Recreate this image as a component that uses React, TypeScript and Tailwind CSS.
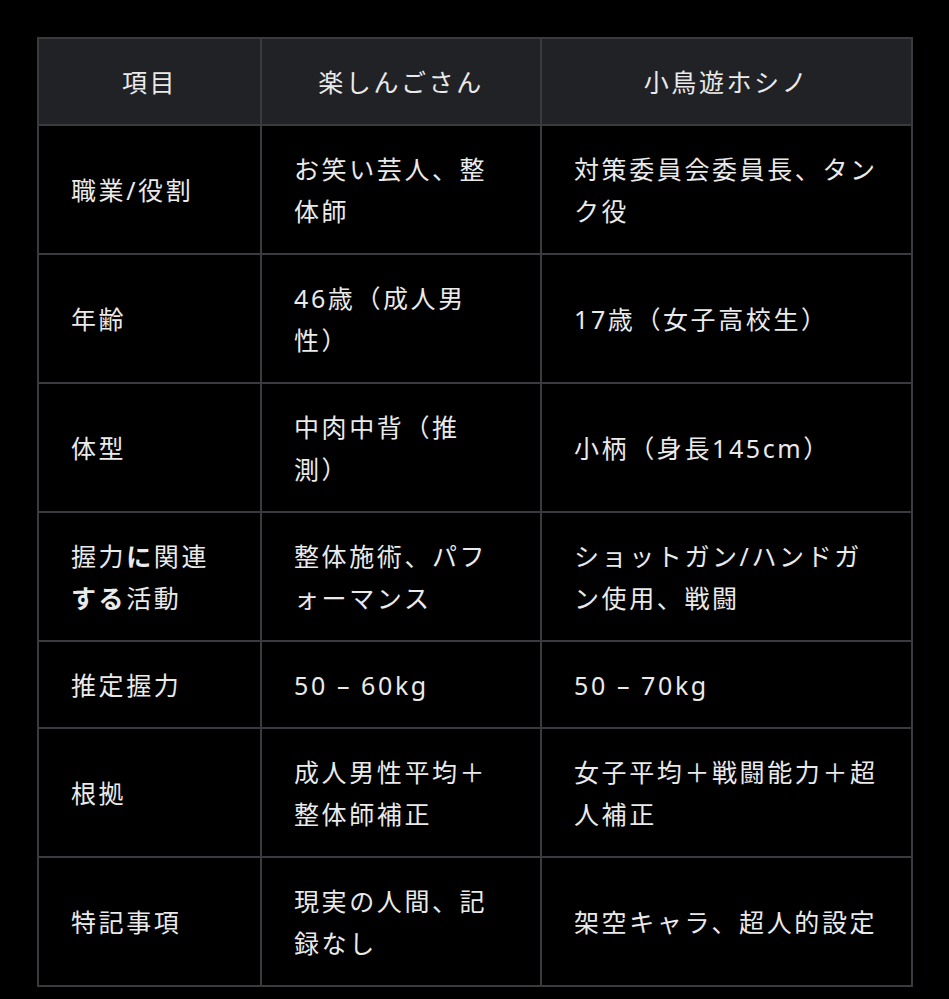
import React from "react";

type Row = {
  label: React.ReactNode;
  a: string;
  b: string;
};

const rows: Row[] = [
  { label: "職業/役割", a: "お笑い芸人、整体師", b: "対策委員会委員長、タンク役" },
  { label: "年齢", a: "46歳（成人男性）", b: "17歳（女子高校生）" },
  { label: "体型", a: "中肉中背（推測）", b: "小柄（身長145cm）" },
  {
    label: (
      <>
        握力<span className="font-semibold">に</span>関連
        <span className="font-semibold">する</span>活動
      </>
    ),
    a: "整体施術、パフォーマンス",
    b: "ショットガン/ハンドガン使用、戦闘",
  },
  { label: "推定握力", a: "50 – 60kg", b: "50 – 70kg" },
  { label: "根拠", a: "成人男性平均＋整体師補正", b: "女子平均＋戦闘能力＋超人補正" },
  { label: "特記事項", a: "現実の人間、記録なし", b: "架空キャラ、超人的設定" },
];

const base = "border-2 border-[#3a3b3f] py-[21.5px] align-middle text-left";

export default function App() {
  return (
    <div
      className="min-h-[999px] w-full bg-black p-[37px] text-[#eaeaea]"
      style={{ fontFamily: '"Noto Sans", "Noto Sans CJK JP", sans-serif' }}
    >
      <table className="w-[874px] table-fixed border-collapse text-[25px] leading-[42px] tracking-[2.6px]">
        <colgroup>
          <col className="w-[223px]" />
          <col className="w-[280px]" />
          <col className="w-[371px]" />
        </colgroup>
        <thead>
          <tr className="bg-[#212226]">
            <th className="border-2 border-[#3a3b3f] py-[21.5px] text-center font-normal">
              項目
            </th>
            <th className="border-2 border-[#3a3b3f] py-[21.5px] text-center font-normal">
              楽しんごさん
            </th>
            <th className="border-2 border-[#3a3b3f] py-[21.5px] text-center font-normal">
              小鳥遊ホシノ
            </th>
          </tr>
        </thead>
        <tbody>
          {rows.map((r, i) => (
            <tr key={i}>
              <td className={`${base} pl-8 pr-6`}>{r.label}</td>
              <td className={`${base} pl-8 pr-[44px]`}>{r.a}</td>
              <td className={`${base} pl-8 pr-6`}>{r.b}</td>
            </tr>
          ))}
        </tbody>
      </table>
    </div>
  );
}
